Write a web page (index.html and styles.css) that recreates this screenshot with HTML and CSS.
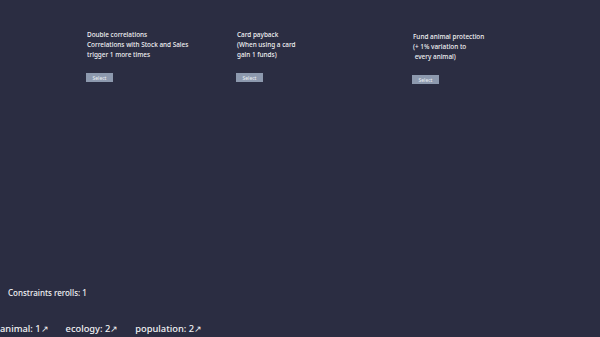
FILE: index.html
```html
<!DOCTYPE html>
<html lang="en">

<head>
    <meta charset="UTF-8">
    <meta name="viewport" content="width=device-width, initial-scale=1.0">
    <title>Upgrades</title>
    <link rel="stylesheet" href="styles.css">
</head>

<body>
    <div class="screen">
        <div class="choices">
            <div class="choice choice--first">
                <p class="choice__text">Double correlations<br>Correlations with Stock and Sales<br>trigger 1 more times</p>
                <button class="choice__btn">Select</button>
            </div>
            <div class="choice choice--second">
                <p class="choice__text">Card payback<br>(When using a card<br>gain 1 funds)</p>
                <button class="choice__btn">Select</button>
            </div>
            <div class="choice choice--third">
                <p class="choice__text">Fund animal protection<br>(+ 1% variation to<br>&nbsp;every animal)</p>
                <button class="choice__btn">Select</button>
            </div>
        </div>

        <div class="rerolls">Constraints rerolls: 1</div>

        <div class="stats">
            <span class="stats__item">animal: 1↗</span>
            <span class="stats__item">ecology: 2↗</span>
            <span class="stats__item">population: 2↗</span>
        </div>
    </div>
</body>

</html>
```

FILE: styles.css
```css
*,
::after,
::before {
    box-sizing: border-box;
}

html,
body {
    height: 100%;
}

body {
    margin: 0;
    background: #2b2d42;
    color: #f2f2f4;
    font-family: "Noto Sans", sans-serif;
}

.screen {
    height: 100%;
    display: flex;
    flex-direction: column;
}

.choices {
    display: flex;
    align-items: flex-start;
    padding-top: 30px;
}

.choice {
    display: flex;
    flex-direction: column;
    align-items: flex-start;
}

.choice--first {
    margin-left: 87px;
    width: 150px;
}

.choice--second {
    width: 176px;
}

.choice--third {
    margin-top: 2px;
}

.choice__text {
    margin: 0;
    font-size: 6.4px;
    font-weight: 500;
    line-height: 10px;
}

.choice__btn {
    margin-top: 13px;
    margin-left: -1px;
    width: 27px;
    height: 9px;
    padding: 0;
    border: 0;
    background: #8d99ae;
    color: #edf0f4;
    font-family: inherit;
    font-size: 5px;
}

.rerolls {
    margin-top: auto;
    padding-left: 8px;
    font-size: 8px;
    font-weight: 500;
    line-height: 12px;
}

.stats {
    display: flex;
    gap: 17px;
    margin-top: 24px;
    margin-bottom: 2px;
    font-size: 9.3px;
    font-weight: 500;
    line-height: 12px;
}
```
